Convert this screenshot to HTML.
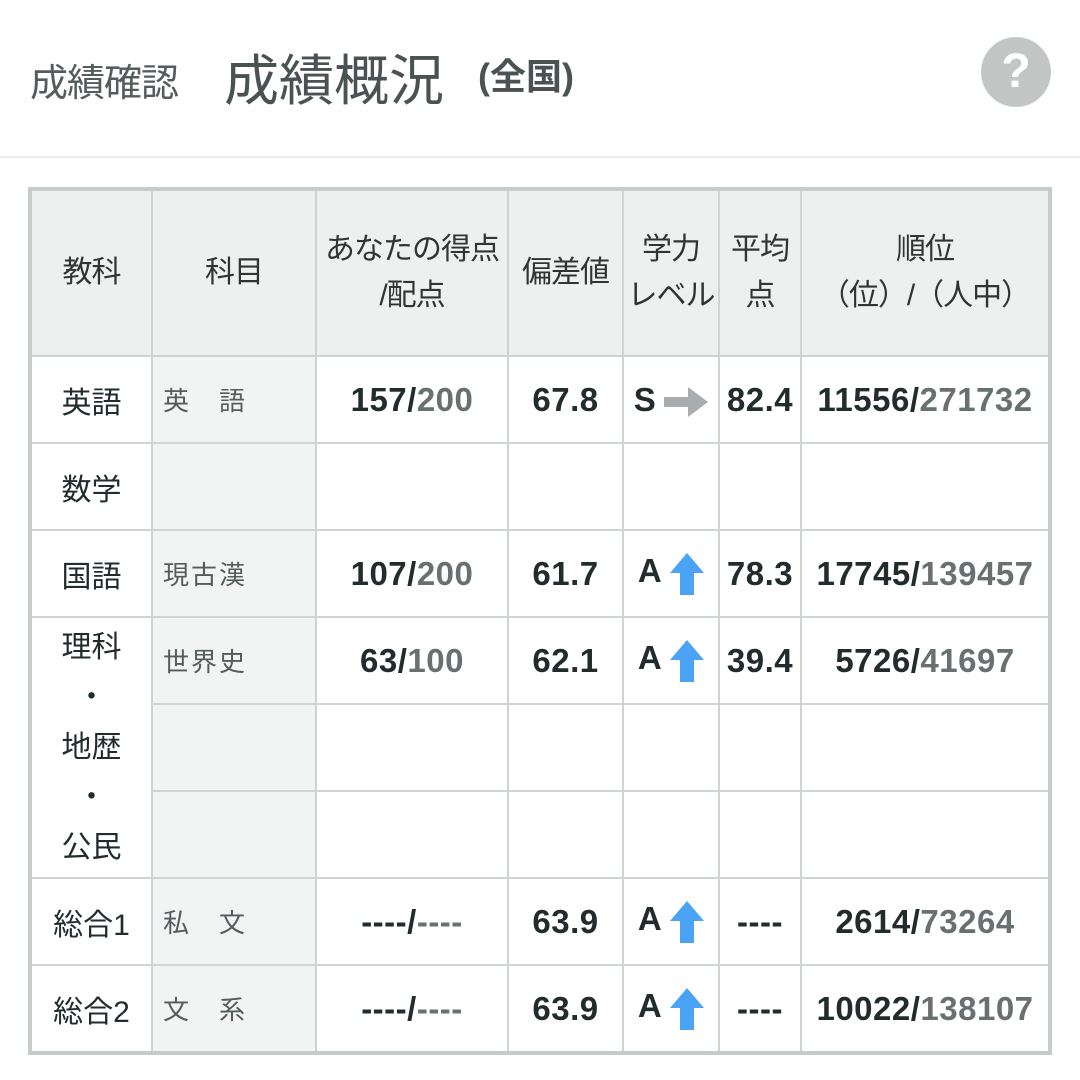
<!DOCTYPE html><html><head><meta charset="utf-8"><style>
body{margin:0;width:1080px;height:1080px;background:#fff;font-family:"Liberation Sans","Noto Sans CJK JP",sans-serif;position:relative;overflow:hidden}
.h1{position:absolute;left:30px;top:52px;font-size:38px;color:#555c5c;letter-spacing:-1px}
.h2{position:absolute;left:224px;top:36px;font-size:55px;color:#4a5252}
.h3{position:absolute;left:478px;top:48px;font-size:36px;color:#4a5252;font-weight:bold}
.q{position:absolute;left:981px;top:37px;width:70px;height:70px;border-radius:50%;background:#c4c6c6;color:#fff;font-weight:bold;font-size:48px;text-align:center;line-height:70px}
.hr{position:absolute;left:0;top:156px;width:1080px;height:2px;background:#ebeded}
table{position:absolute;left:28px;top:187px;border-collapse:collapse;border:4px solid #c8cbcb;table-layout:fixed;width:1024px}
td{border:2px solid #d0d3d3;text-align:center;color:#222c2c;padding:0;height:85px}
tr.hd td{background:#eef0f0;height:164px;font-size:30px;color:#333;line-height:46px;letter-spacing:-1px}
td.k{font-size:30px}
td.s{background:#f2f3f3;text-align:left;padding-left:10px;font-size:26px;color:#555c5c;letter-spacing:2px}
td.n{font-size:33px;font-weight:bold;letter-spacing:0.5px}
.g{color:#697070}
.ar{display:inline-block;vertical-align:middle;margin-left:8px}
</style></head><body>
<div class="h1">成績確認</div><div class="h2">成績概況</div><div class="h3">(全国)</div>
<div class="q">?</div><div class="hr"></div>
<table>
<colgroup><col style="width:122px"><col style="width:164px"><col style="width:192px"><col style="width:115px"><col style="width:96px"><col style="width:82px"><col></colgroup>
<tr class="hd"><td>教科</td><td>科目</td><td>あなたの得点<br>/配点</td><td>偏差値</td><td>学力<br>レベル</td><td>平均<br>点</td><td>順位<br>（位）/（人中）</td></tr>
<tr><td class="k">英語</td><td class="s">英　語</td><td class="n">157/<span class="g">200</span></td><td class="n">67.8</td><td class="n">S<svg class="ar" width="44" height="30" viewBox="0 0 44 30"><path d="M0 10h24V0l20 15-20 15V20H0z" fill="#a9adad"/></svg></td><td class="n">82.4</td><td class="n">11556/<span class="g">271732</span></td></tr>
<tr><td class="k">数学</td><td class="s"></td><td></td><td></td><td></td><td></td><td></td></tr>
<tr><td class="k">国語</td><td class="s">現古漢</td><td class="n">107/<span class="g">200</span></td><td class="n">61.7</td><td class="n">A<svg class="ar" width="34" height="42" viewBox="0 0 34 42"><path d="M17 0l17 20H24v22H10V20H0z" fill="#4aa3f5"/></svg></td><td class="n">78.3</td><td class="n">17745/<span class="g">139457</span></td></tr>
<tr><td class="k" rowspan="3" style="line-height:50px">理科<br>・<br>地歴<br>・<br>公民</td><td class="s">世界史</td><td class="n">63/<span class="g">100</span></td><td class="n">62.1</td><td class="n">A<svg class="ar" width="34" height="42" viewBox="0 0 34 42"><path d="M17 0l17 20H24v22H10V20H0z" fill="#4aa3f5"/></svg></td><td class="n">39.4</td><td class="n">5726/<span class="g">41697</span></td></tr>
<tr><td class="s"></td><td></td><td></td><td></td><td></td><td></td></tr>
<tr><td class="s"></td><td></td><td></td><td></td><td></td><td></td></tr>
<tr><td class="k">総合1</td><td class="s">私　文</td><td class="n">----/<span class="g">----</span></td><td class="n">63.9</td><td class="n">A<svg class="ar" width="34" height="42" viewBox="0 0 34 42"><path d="M17 0l17 20H24v22H10V20H0z" fill="#4aa3f5"/></svg></td><td class="n">----</td><td class="n">2614/<span class="g">73264</span></td></tr>
<tr><td class="k">総合2</td><td class="s">文　系</td><td class="n">----/<span class="g">----</span></td><td class="n">63.9</td><td class="n">A<svg class="ar" width="34" height="42" viewBox="0 0 34 42"><path d="M17 0l17 20H24v22H10V20H0z" fill="#4aa3f5"/></svg></td><td class="n">----</td><td class="n">10022/<span class="g">138107</span></td></tr>
</table>
</body></html>
